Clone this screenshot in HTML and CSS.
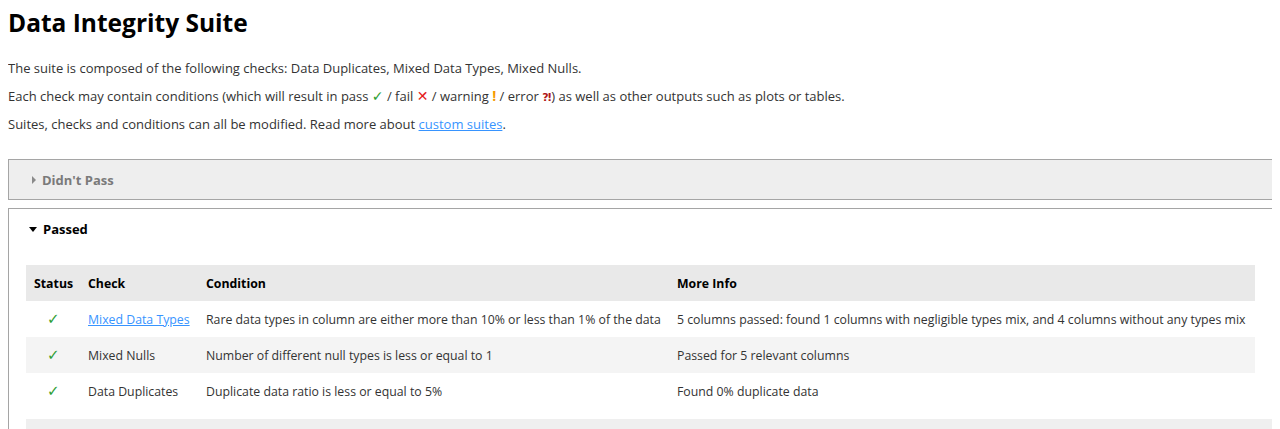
FILE: index.html
```html
<!DOCTYPE html>
<html>
<head>
<meta charset="utf-8">
<link rel="stylesheet" href="styles.css">
</head>
<body>
<h1 class="title">Data Integrity Suite</h1>
<p class="para">The suite is composed of the following checks: Data Duplicates, Mixed Data Types, Mixed Nulls.</p>
<p class="para">Each check may contain conditions (which will result in pass <span class="ok">✓</span> / fail <span class="bad">✕</span> / warning <span class="warn">!</span> / error <span class="err">⁈</span>) as well as other outputs such as plots or tables.</p>
<p class="para">Suites, checks and conditions can all be modified. Read more about <a class="link" href="#">custom suites</a>.</p>

<div class="section section-closed">
  <div class="summary summary-muted"><span class="caret caret-right"></span>Didn't Pass</div>
</div>

<div class="section section-open">
  <div class="summary"><span class="caret caret-down"></span>Passed</div>
  <table class="results">
    <thead>
      <tr>
        <th class="col-status">Status</th>
        <th class="col-check">Check</th>
        <th class="col-cond">Condition</th>
        <th>More Info</th>
      </tr>
    </thead>
    <tbody>
      <tr>
        <td class="col-status"><span class="ok tick">✓</span></td>
        <td><a class="link" href="#">Mixed Data Types</a></td>
        <td>Rare data types in column are either more than 10% or less than 1% of the data</td>
        <td>5 columns passed: found 1 columns with negligible types mix, and 4 columns without any types mix</td>
      </tr>
      <tr>
        <td class="col-status"><span class="ok tick">✓</span></td>
        <td>Mixed Nulls</td>
        <td>Number of different null types is less or equal to 1</td>
        <td>Passed for 5 relevant columns</td>
      </tr>
      <tr>
        <td class="col-status"><span class="ok tick">✓</span></td>
        <td>Data Duplicates</td>
        <td>Duplicate data ratio is less or equal to 5%</td>
        <td>Found 0% duplicate data</td>
      </tr>
    </tbody>
  </table>
  <div class="next-band"></div>
</div>
</body>
</html>
```

FILE: styles.css
```css
html {
  overflow: hidden;
}

body {
  margin: 8px;
  background: #ffffff;
  color: #333333;
  font-family: "Open Sans", "Noto Sans", sans-serif;
  font-size: 13px;
}

.title {
  margin: 0 0 21px 0;
  font-size: 24.5px;
  line-height: 30px;
  font-weight: 700;
  color: #000000;
}

.para {
  margin: 10px 0;
  height: 18px;
  line-height: 18px;
}

.ok {
  color: #2f9e33;
  font-family: "DejaVu Sans", sans-serif;
  font-size: 14px;
  line-height: 0;
}

.bad {
  color: #e51a1a;
  font-family: "DejaVu Sans", sans-serif;
  font-size: 14px;
  font-weight: 700;
  line-height: 0;
}

.warn {
  color: #f59b00;
  font-weight: 700;
  font-size: 14px;
  line-height: 0;
}

.err {
  color: #b01818;
  font-family: "DejaVu Sans", sans-serif;
  font-weight: 700;
  font-size: 11px;
  line-height: 0;
}

.link {
  color: #3794ff;
  text-decoration: underline;
}

.section {
  width: 1300px;
  border: 1px solid #a5a5a5;
  box-sizing: border-box;
}

.section-closed {
  margin-top: 26px;
  background: #eeeeee;
}

.section-open {
  margin-top: 8px;
  background: #ffffff;
  padding: 0 0 40px 17px;
}

.summary {
  display: flex;
  align-items: center;
  height: 39px;
  padding-left: 20px;
  font-weight: 700;
  color: #000000;
  font-size: 13px;
}

.section-open .summary {
  padding-left: 3px;
  height: 40px;
}

.summary-muted {
  color: #7a7a7a;
}

.caret {
  display: inline-block;
  width: 0;
  height: 0;
}

.caret-right {
  border-top: 4px solid transparent;
  border-bottom: 4px solid transparent;
  border-left: 4px solid #8a8a8a;
  margin-left: 3px;
  margin-right: 6px;
}

.caret-down {
  border-left: 4px solid transparent;
  border-right: 4px solid transparent;
  border-top: 5px solid #000000;
  margin-right: 6px;
}

.results {
  margin-top: 16px;
  width: 1229px;
  border-collapse: collapse;
  font-size: 12.3px;
  table-layout: fixed;
}

.results th,
.results td {
  height: 36px;
  padding: 0 8px;
  text-align: left;
  white-space: nowrap;
  box-sizing: border-box;
}

.results th {
  background: #e9e9e9;
  color: #000000;
  font-weight: 700;
}

.results td {
  color: #333333;
}

.results tbody tr:nth-child(2) td {
  background: #f4f4f4;
}

.results .col-status {
  width: 54px;
  padding: 0 4px 0 8px;
  text-align: left;
}

.results td.col-status {
  padding-left: 21px;
}

.tick {
  font-size: 15px;
}

.col-check {
  width: 118px;
}

.col-cond {
  width: 471px;
}

.next-band {
  margin-top: 10px;
  height: 12px;
  width: 1300px;
  background: #efefef;
}
```
